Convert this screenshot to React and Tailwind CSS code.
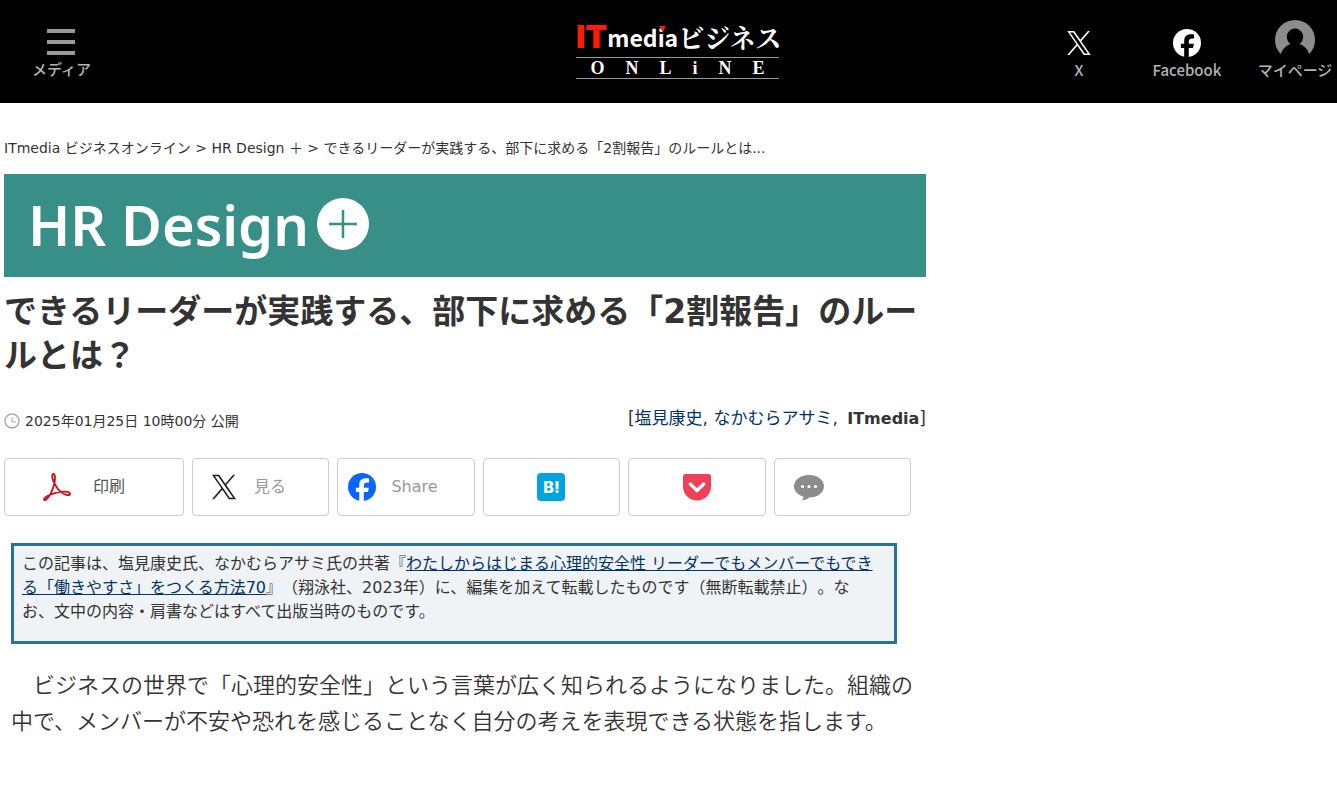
import React from 'react';

const XLogo = ({ className }) => (
  <svg viewBox="0 0 1200 1227" className={className} fill="currentColor" aria-hidden="true">
    <path d="M714.163 519.284L1160.89 0H1055.03L667.137 450.887L357.328 0H0L468.492 681.821L0 1226.37H105.866L515.491 750.218L842.672 1226.37H1200L714.137 519.284H714.163ZM569.165 687.828L521.697 619.934L144.011 79.6944H306.615L611.412 515.685L658.88 583.579L1055.08 1150.3H892.476L569.165 687.854V687.828Z" />
  </svg>
);

const FacebookLogo = ({ className, letter }) => (
  <svg viewBox="0 0 28 28" className={className} aria-hidden="true">
    <circle cx="14" cy="14" r="14" fill="currentColor" />
    <path
      fill={letter}
      d="M11.2 28v-9.1H7.9v-4.2h3.3v-2.2c0-4.9 2.2-7.2 7-7.2.9 0 2.2.1 2.9.3v3.9h-1.6c-2.7 0-3.7 1-3.7 3.4v1.8h5.1l-.9 4.2h-4.2V28z"
    />
  </svg>
);

const UserIcon = () => (
  <svg viewBox="0 0 40 38" className="h-[38px] w-10" aria-hidden="true">
    <circle cx="20" cy="20" r="20" fill="#8c8c8c" />
    <ellipse cx="20" cy="17" rx="8.200" ry="8.500" fill="#000" />
    <path d="M5 38c1-7 4-11.500 10.500-14h9c6.500 2.500 9.500 7 10.500 14z" fill="#000" />
  </svg>
);

const AcrobatIcon = () => (
  <svg viewBox="0 0 28 28" className="size-7" fill="none" stroke="#c8161d" strokeLinejoin="round" aria-hidden="true">
    <path
      strokeWidth="1.900"
      d="M10.500 1c-2 0-1.500 4.500.3 8.200 2.200 4.700 6.900 11.500 13 12.800 3 .5 4-1 2.600-2.300-1.800-1.500-8.400-1.400-13.700.2C8 21.300.8 24.200 1 26.300c.4 2.200 3.600-.2 6-4.400 2.400-4 5-12 5-16.500C12 2.700 11.600 1 10.500 1z"
    />
  </svg>
);

const PocketIcon = () => (
  <svg viewBox="0 0 28 28" className="size-7" aria-hidden="true">
    <path fill="#ef4056" d="M2.500 1h23A2.500 2.500 0 0 1 28 3.500V13.500a14 14 0 0 1-28 0V3.500A2.500 2.500 0 0 1 2.500 1z" />
    <path d="M7.300 11l6.700 6.400 6.700-6.400" fill="none" stroke="#fff" strokeWidth="3.400" strokeLinecap="round" strokeLinejoin="round" />
  </svg>
);

const CommentIcon = () => (
  <svg viewBox="0 0 30 28" className="h-7 w-[30px]" aria-hidden="true">
    <path fill="#8c8c8c" d="M15 2c8.200 0 15 4.800 15 11.200S23.500 24.500 15 24.500c-2 2-4.500 3-7.500 2.700 1.400-.8 2-2 2-3.500C4 22 0 18 0 13.200 0 6.800 6.800 2 15 2z" />
    <circle cx="8.500" cy="13.500" r="1.600" fill="#fff" />
    <circle cx="15" cy="13.500" r="1.600" fill="#fff" />
    <circle cx="21.500" cy="13.500" r="1.600" fill="#fff" />
  </svg>
);

const SiteLogo = () => (
  <a href="#" className="ml-[18px] block w-[203px] text-white">
    <span className="flex h-9 items-center justify-between whitespace-nowrap pb-1 leading-8">
      <span className="font-['Inter'] text-[32px] font-black text-[#ff1a0a]">IT</span>
      <span className="relative font-['Noto_Sans_CJK_JP',sans-serif] text-[23px] font-bold">
        media
        <svg viewBox="0 0 6 5" className="absolute right-[12px] top-[5px] h-[6px] w-[7px]" aria-hidden="true">
          <path d="M0 0h6L3 5z" fill="#ff1a0a" />
        </svg>
      </span>
      <span className="font-['Noto_Serif_CJK_JP','Noto_Sans_CJK_JP',serif] text-[26px] font-bold">ビジネス</span>
    </span>
    <span className="flex h-[22px] items-center justify-around border-y border-[#999] px-1 font-['Liberation_Serif'] text-lg font-bold leading-5">
      {['O', 'N', 'L', 'i', 'N', 'E'].map((letter, index) => (
        <span key={index}>{letter}</span>
      ))}
    </span>
  </a>
);

const HeaderLink = ({ label, children }) => (
  <a href="#" className="flex w-20 flex-col items-center whitespace-nowrap">
    <span className="flex h-[38px] items-center justify-center">{children}</span>
    <span className="leading-6">{label}</span>
  </a>
);

const ShareButton = ({ className, label, children }) => (
  <button
    type="button"
    aria-label={label}
    className={`flex h-[58px] items-center rounded border border-[#ccc] bg-white ${className}`}
  >
    {children}
  </button>
);

const App = () => {
  return (
    <div className="min-h-screen bg-white font-['DejaVu_Sans','Noto_Sans_CJK_JP',sans-serif] text-[#333] [text-spacing-trim:space-all]">
      {/* Header */}
      <header className="grid h-[103px] grid-cols-[1fr_auto_1fr] items-start bg-black font-['Noto_Sans_CJK_JP',sans-serif] text-[15px] font-medium text-[#b3b3b3]">
        <button type="button" className="ml-8 mt-[29px] flex w-fit flex-col items-center">
          <span className="flex flex-col gap-[7px]">
            <span className="h-1 w-7 bg-[#999]" />
            <span className="h-1 w-7 bg-[#999]" />
            <span className="h-1 w-7 bg-[#999]" />
          </span>
          <span className="mt-1 leading-5">メディア</span>
        </button>

        <div className="pt-[21px]">
          <SiteLogo />
        </div>

        <nav className="flex justify-end gap-7 pr-[2px] pt-5">
          <HeaderLink label="X">
            <XLogo className="mt-2 h-6 w-6 text-white" />
          </HeaderLink>
          <HeaderLink label="Facebook">
            <FacebookLogo className="mt-2 size-7 text-white" letter="#000" />
          </HeaderLink>
          <HeaderLink label="マイページ">
            <UserIcon />
          </HeaderLink>
        </nav>
      </header>

      <main className="ml-1 mr-1 max-w-[922px]">
        {/* Breadcrumb */}
        <nav className="pt-[35px] text-sm leading-5">
          <a href="#">ITmedia ビジネスオンライン</a> &gt; <a href="#">HR Design ＋</a> &gt;{' '}
          できるリーダーが実践する、部下に求める「2割報告」のルールとは...
        </nav>

        <a
          href="#"
          className="mt-4 flex h-[103px] items-center gap-2 bg-[#388f87] pb-[3px] pl-6 font-['Noto_Sans'] text-[56px] font-semibold leading-none text-white"
        >
          HR Design
          <svg viewBox="0 0 52 52" className="size-[52px]" aria-hidden="true">
            <circle cx="26" cy="26" r="26" fill="#fff" />
            <path d="M26 12v28M12 26h28" stroke="#388f87" strokeWidth="2.500" />
          </svg>
        </a>

        <h1 className="mt-[13px] text-[33px] font-bold leading-[44px]">
          できるリーダーが実践する、部下に求める「2割報告」のルールとは？
        </h1>

        {/* Date and authors */}
        <div className="mt-7 flex items-start justify-between">
          <p className="flex items-center gap-[5px] pt-[5px] text-sm leading-5">
            <svg viewBox="0 0 16 16" className="size-4" fill="none" stroke="#aaa" aria-hidden="true">
              <circle cx="8" cy="8" r="7" strokeWidth="1.500" />
              <path d="M8 4v5h4" />
            </svg>
            2025年01月25日 10時00分 公開
          </p>
          <p className="text-[17px] leading-6">
            [
            <a href="#" className="text-[#003366]">
              塩見康史, なかむらアサミ
            </a>
            , <b className="ml-1 text-base">ITmedia</b>]
          </p>
        </div>

        {/* Share buttons */}
        <div className="mt-[27px] grid max-w-[907px] grid-cols-[180px_repeat(5,1fr)] gap-2 text-base text-[#999]">
          <ShareButton className="gap-[22px] pl-[38px]">
            <AcrobatIcon />
            <span className="text-[#555]">印刷</span>
          </ShareButton>
          <ShareButton className="gap-[18px] pl-[19px]">
            <XLogo className="h-[26px] w-6 text-[#222]" />
            見る
          </ShareButton>
          <ShareButton className="gap-[15px] pl-[10px]">
            <FacebookLogo className="size-7 text-[#0866ff]" letter="#fff" />
            Share
          </ShareButton>
          <ShareButton className="justify-center">
            <span className="flex size-7 items-center justify-center rounded bg-[#00a4de] font-['Inter'] text-base font-extrabold text-white">
              B!
            </span>
          </ShareButton>
          <ShareButton className="justify-center" label="Pocket">
            <PocketIcon />
          </ShareButton>
          <ShareButton className="pl-[19px]" label="コメント">
            <CommentIcon />
          </ShareButton>
        </div>

        <article className="pl-[7px]">
          <p className="mt-[27px] max-w-[886px] border-[3px] border-[#267298] bg-[#f0f3f6] pb-[17px] pl-2 pr-[18px] pt-[6px] text-base leading-6">
            この記事は、塩見康史氏、なかむらアサミ氏の共著『
            <a href="#" className="text-[#003366] underline">
              わたしからはじまる心理的安全性 リーダーでもメンバーでもできる「働きやすさ」をつくる方法70
            </a>
            』（翔泳社、2023年）に、編集を加えて転載したものです（無断転載禁止）。なお、文中の内容・肩書などはすべて出版当時のものです。
          </p>

          <p className="mt-6 text-[22px] font-[350] leading-9">
            {'\u3000'}ビジネスの世界で「心理的安全性」という言葉が広く知られるようになりました。組織の中で、メンバーが不安や恐れを感じることなく自分の考えを表現できる状態を指します。
          </p>
        </article>
      </main>
    </div>
  );
};

export default App;
